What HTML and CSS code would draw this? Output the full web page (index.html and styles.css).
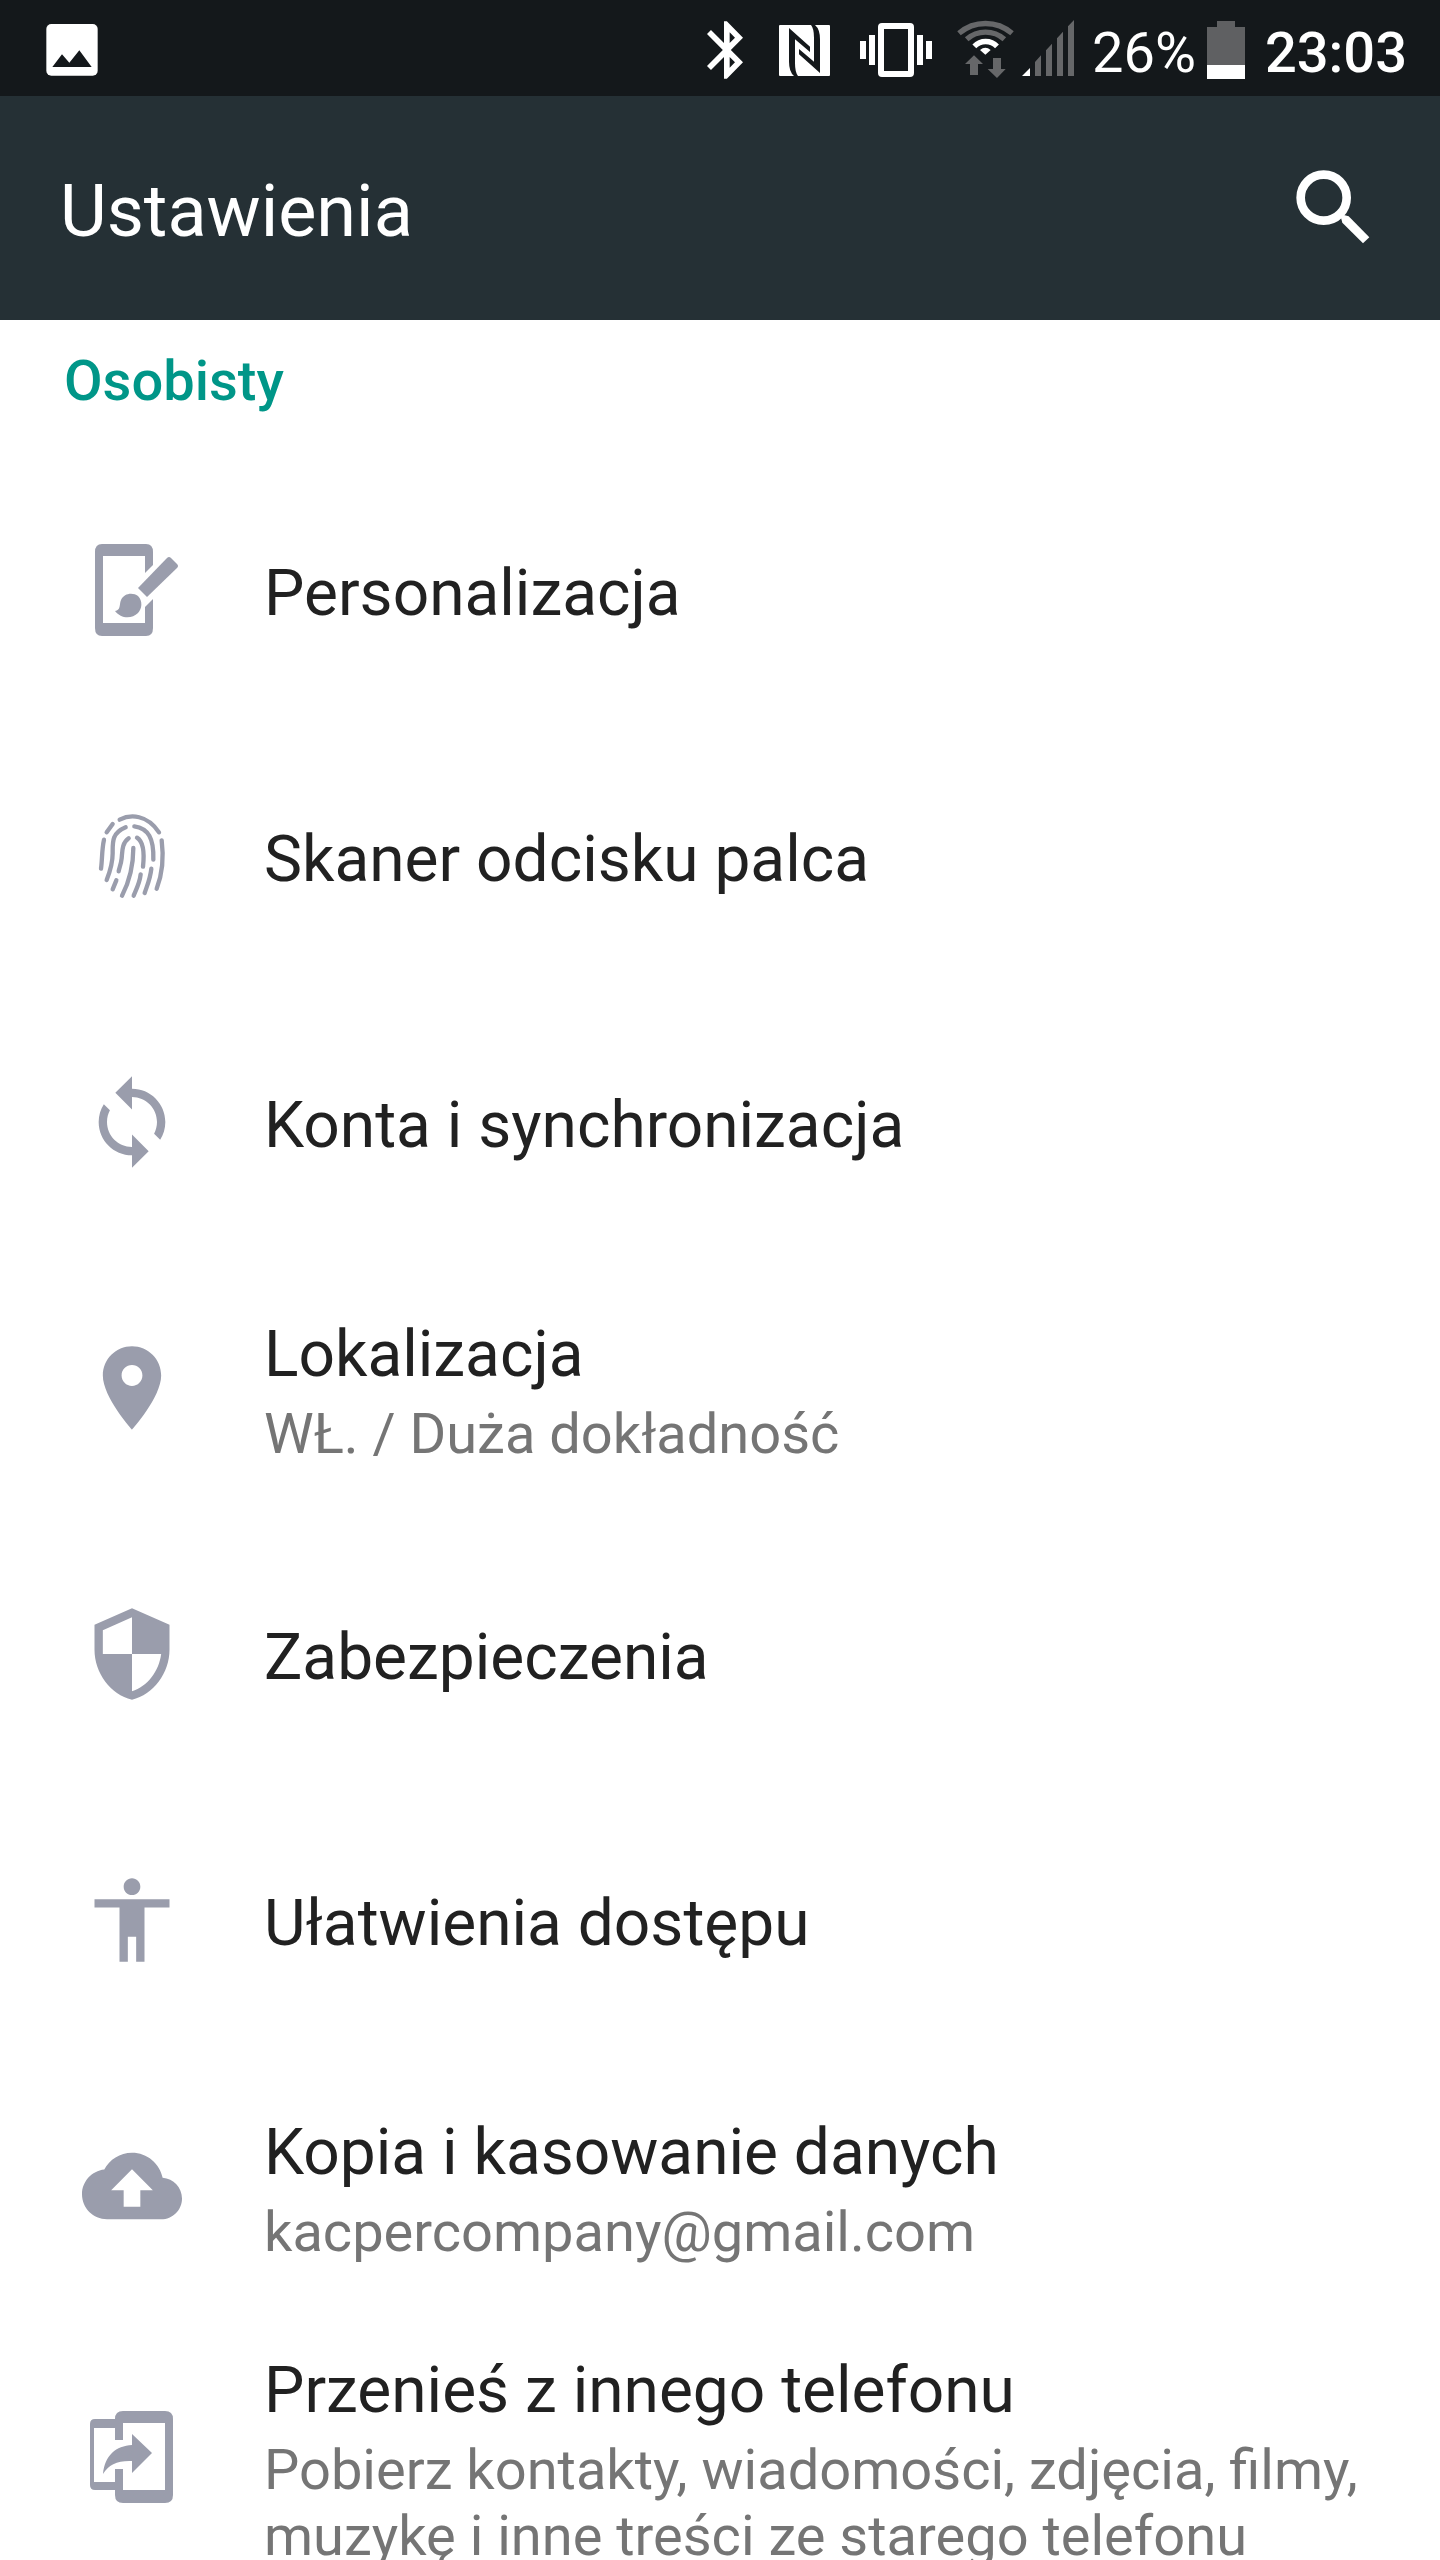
FILE: index.html
```html
<!DOCTYPE html>
<html lang="pl">
<head>
<meta charset="utf-8">
<meta name="viewport" content="width=device-width, initial-scale=1">
<title>Ustawienia</title>
<link rel="stylesheet" href="styles.css">
</head>
<body>
<div class="status-bar">
  <svg class="status-icon picture" viewBox="138 48 156 192" aria-hidden="true">
    <rect x="139" y="72" width="154" height="155" rx="15" fill="#fff"/>
    <path d="M157 201L186 163L208 188L238 151L275 201z" fill="#14181b"/>
  </svg>
  <svg class="status-icon bluetooth" viewBox="81 48 108 192" aria-hidden="true">
    <path transform="translate(38.5 46.8) scale(8.5 8.6)" fill="#fff" d="M17.71 7.71L12 2h-1v7.59L6.41 5 5 6.41 10.59 12 5 17.59 6.41 19 11 14.41V22h1l5.71-5.71-4.3-4.29 4.3-4.29zM13 5.83l1.88 1.88L13 9.59V5.83zm1.88 10.46L13 18.17v-3.76l1.88 1.88z"/>
  </svg>
  <svg class="status-icon nfc" viewBox="297 48 153 192" aria-hidden="true">
    <rect x="297" y="75" width="153" height="153" rx="3" fill="#fff"/>
    <path fill="#14181b" d="M327 84L390 140V156L345 118V190Q345 217 354 228H342Q327 215 327 185zM420 219L357 163V147L402 185V113Q402 86 393 75H405Q420 88 420 118z"/>
  </svg>
  <svg class="status-icon vibrate" viewBox="540 48 216 192" aria-hidden="true">
    <rect x="603" y="78" width="90" height="144" rx="3" fill="none" stroke="#fff" stroke-width="18"/>
    <path fill="#fff" d="M540 123h18v54h-18zM567 105h18v90h-18zM711 105h18v90h-18zM738 123h18v54h-18z"/>
  </svg>
  <svg class="status-icon wifi" viewBox="831 48 171 192" aria-hidden="true">
    <path fill="none" stroke="#666769" stroke-width="16" d="M837 100A122 122 0 0 1 996 100M860 118A85 85 0 0 1 973 118"/>
    <path fill="none" stroke="#fff" stroke-width="16" d="M883 139A47 47 0 0 1 951 139"/>
    <path fill="#fff" d="M900 150Q916 137 932 150L916 164z"/>
    <path fill="#666769" d="M882 166L909 192H894V225H870V192H855zM939 174H963V207H977L951 234L923 207H939z"/>
  </svg>
  <svg class="status-icon signal" viewBox="1026 48 156 192" aria-hidden="true">
    <path fill="#fff" d="M1026 228L1050 204V228z"/>
    <path fill="#666769" d="M1065 228V186L1083 166V228zM1098 228V151L1116 131V228zM1131 228V115L1149 95V228zM1164 228V79L1182 60V228z"/>
  </svg>
  <span class="charge">26%</span>
  <svg class="status-icon battery" viewBox="561 48 114 192" aria-hidden="true">
    <path fill="#5f6062" d="M561 81H591V63H645V81H675V195H561z"/>
    <path fill="#fff" d="M561 195H675V237H561z"/>
  </svg>
  <time class="clock">23:03</time>
</div>

<header class="app-bar">
  <h1 class="app-title">Ustawienia</h1>
  <button class="search" type="button" aria-label="Szukaj">
    <svg class="search-icon" viewBox="90 78 252 252" aria-hidden="true">
      <circle cx="191" cy="173" r="69" fill="none" stroke="#fff" stroke-width="26"/>
      <path d="M240 222L247 248L309 310L328 292L266 229z" fill="#fff"/>
    </svg>
  </button>
</header>

<main class="content">
  <h2 class="section-title">Osobisty</h2>
  <ul class="settings">
    <li><a class="item" href="#personalizacja">
      <svg class="item-icon" viewBox="0 0 100 100" aria-hidden="true">
        <path d="M20 4H64Q71 4 71 12V25L63 33V16H21V83H63V67L71 59V88Q71 96 64 96H20Q13 96 13 88V12Q13 4 20 4z"/>
        <path d="M85 18Q87 16 89 18L95 24Q97 26 95 28L65 57L56 48z"/>
        <path d="M33 71C39 70 37 65 39 60C42 53 51 52 56 56C61 61 60 69 56 73C50 79 39 79 33 71z"/>
      </svg>
      <span class="item-text"><span class="item-title">Personalizacja</span></span>
    </a></li>
    <li><a class="item" href="#odcisk">
      <svg class="item-icon line" viewBox="36 48 300 300" aria-hidden="true">
        <path d="M149 89C182 72 232 74 267 127M110 127L128 102M102 149C95 180 97 210 93 236M167 112C125 130 128 155 128 190C128 220 118 250 110 270M193 109C235 115 252 145 250 209M176 145C155 160 157 185 155 205C153 225 147 235 146 244M201 143C220 155 224 185 219 230M190 174C190 225 178 275 156 317M275 151C282 205 278 250 260 296M244 236C241 265 232 285 224 309M212 253C209 280 198 300 191 317M139 271L128 298"/>
      </svg>
      <span class="item-text"><span class="item-title">Skaner odcisku palca</span></span>
    </a></li>
    <li><a class="item" href="#konta">
      <svg class="item-icon" viewBox="0 0 24 24" aria-hidden="true">
        <path d="M12 4V1L8 5l4 4V6c3.31 0 6 2.69 6 6 0 1.01-.25 1.97-.7 2.8l1.46 1.46C19.54 15.03 20 13.57 20 12c0-4.42-3.58-8-8-8zm0 14c-3.31 0-6-2.69-6-6 0-1.01.25-1.97.7-2.8L5.24 7.74C4.46 8.97 4 10.43 4 12c0 4.42 3.58 8 8 8v3l4-4-4-4v3z"/>
      </svg>
      <span class="item-text"><span class="item-title">Konta i synchronizacja</span></span>
    </a></li>
    <li><a class="item" href="#lokalizacja">
      <svg class="item-icon" viewBox="0 0 24 24" aria-hidden="true">
        <path d="M12 2C8.13 2 5 5.13 5 9c0 5.25 7 13 7 13s7-7.75 7-13c0-3.87-3.13-7-7-7zm0 9.5c-1.38 0-2.5-1.12-2.5-2.5s1.12-2.5 2.5-2.5 2.5 1.12 2.5 2.5-1.12 2.5-2.5 2.5z"/>
      </svg>
      <span class="item-text"><span class="item-title">Lokalizacja</span><span class="item-summary">WŁ. / Duża dokładność</span></span>
    </a></li>
    <li><a class="item" href="#zabezpieczenia">
      <svg class="item-icon" viewBox="0 0 24 24" aria-hidden="true">
        <path d="M12 1L3 5v6c0 5.55 3.84 10.74 9 12 5.16-1.26 9-6.45 9-12V5l-9-4zm0 10.99h7c-.53 4.12-3.28 7.79-7 8.94V12H5V6.3l7-3.11v8.8z"/>
      </svg>
      <span class="item-text"><span class="item-title">Zabezpieczenia</span></span>
    </a></li>
    <li><a class="item" href="#ulatwienia">
      <svg class="item-icon" viewBox="0 0 24 24" aria-hidden="true">
        <path d="M12 2c1.1 0 2 .9 2 2s-.9 2-2 2-2-.9-2-2 .9-2 2-2zm9 7h-6v13h-2v-6h-2v6H9V9H3V7h18v2z"/>
      </svg>
      <span class="item-text"><span class="item-title">Ułatwienia dostępu</span></span>
    </a></li>
    <li><a class="item" href="#kopia">
      <svg class="item-icon" viewBox="0 0 24 24" aria-hidden="true">
        <path d="M19.35 10.04C18.67 6.59 15.64 4 12 4 9.11 4 6.6 5.64 5.35 8.04 2.34 8.36 0 10.91 0 14c0 3.31 2.69 6 6 6h13c2.76 0 5-2.24 5-5 0-2.64-2.05-4.78-4.65-4.96zM14 13v4h-4v-4H7l5-5 5 5h-3z"/>
      </svg>
      <span class="item-text"><span class="item-title">Kopia i kasowanie danych</span><span class="item-summary">kacpercompany@gmail.com</span></span>
    </a></li>
    <li><a class="item" href="#przenies">
      <svg class="item-icon" viewBox="0 0 100 100" aria-hidden="true">
        <path d="M33 12Q33 4 41 4H83Q91 4 91 12V88Q91 96 83 96H41Q33 96 33 88V83H13Q8 83 8 78V17Q8 12 13 12zM41 16V33H33V21H12V75H33V62H41V83H83V16z" fill-rule="evenodd"/>
        <path d="M50 27L70 46L50 66V54Q29 53 21 67C23 48 34 39 50 38z"/>
      </svg>
      <span class="item-text"><span class="item-title">Przenieś z innego telefonu</span><span class="item-summary">Pobierz kontakty, wiadomości, zdjęcia, filmy, muzykę i inne treści ze starego telefonu</span></span>
    </a></li>
  </ul>
</main>
</body>
</html>
```
FILE: styles.css
```css
* {
  box-sizing: border-box;
}

body {
  display: flex;
  flex-direction: column;
  height: 100vh;
  margin: 0;
  overflow: hidden;
  background: #fff;
  color: #212121;
  font-family: Roboto, "Noto Sans", sans-serif;
}

.status-bar {
  display: flex;
  flex: none;
  align-items: center;
  height: 96px;
  padding: 0 33px 0 46px;
  background: #14181b;
  color: #fff;
  font-size: 56px;
  line-height: 66px;
}

.status-icon {
  flex: none;
  height: 64px;
}

.picture {
  width: 52px;
  margin-right: auto;
}

.bluetooth {
  width: 36px;
  margin-right: 36px;
}

.nfc {
  width: 51px;
  margin-right: 30px;
}

.vibrate {
  width: 72px;
  margin-right: 25px;
}

.wifi {
  width: 57px;
  margin-right: 8px;
}

.signal {
  width: 52px;
}

.charge {
  padding-top: 10px;
  margin: 0 11px 0 18px;
}

.battery {
  width: 38px;
  margin-right: 20px;
}

.clock {
  padding-top: 10px;
  font-weight: 500;
}

.app-bar {
  display: flex;
  flex: none;
  align-items: center;
  justify-content: space-between;
  height: 224px;
  padding: 0 66px 0 60px;
  background: #253035;
  color: #fff;
}

.app-title {
  margin: 0;
  padding-top: 8px;
  font-size: 72px;
  font-weight: 400;
  line-height: 84px;
}

.search {
  padding: 0;
  border: 0;
  background: none;
  cursor: pointer;
}

.search-icon {
  display: block;
  width: 84px;
  height: 84px;
}

.content {
  flex: 1;
  min-height: 0;
  overflow-y: auto;
  scrollbar-width: none;
}

.section-title {
  margin: 0;
  padding: 28px 64px 43px;
  color: #009688;
  font-size: 56px;
  font-weight: 500;
  line-height: 66px;
}

.settings {
  margin: 0;
  padding: 0;
  list-style: none;
}

.item {
  display: flex;
  align-items: center;
  gap: 82px;
  min-height: 266px;
  padding: 26px 56px 26px 82px;
  color: inherit;
  text-decoration: none;
}

.item-icon {
  flex: none;
  width: 100px;
  height: 100px;
  fill: #9a9dac;
}

.item-icon.line {
  fill: none;
  stroke: #9a9dac;
  stroke-width: 13px;
  stroke-linecap: round;
}

.item-text {
  display: flex;
  flex-direction: column;
  gap: 8px;
  padding-top: 8px;
}

.item-title {
  font-size: 64px;
  line-height: 76px;
}

.item-summary {
  color: #757575;
  font-size: 56px;
  line-height: 66px;
}
```
